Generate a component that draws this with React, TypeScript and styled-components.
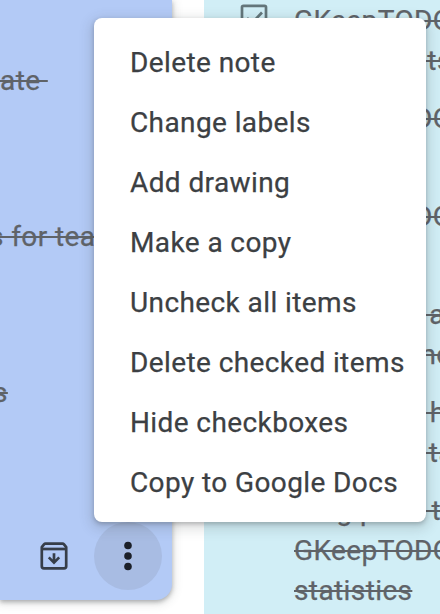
import React from "react";
import styled, { createGlobalStyle } from "styled-components";

const Global = createGlobalStyle`
  *{box-sizing:border-box}
  html,body,#root{margin:0;height:100%}
  body{background:#fff;overflow:hidden;font-family:Roboto,sans-serif;font-size:28px;-webkit-text-stroke:.25px currentColor}
`;
const Board = styled.main`
  position:relative;width:440px;height:614px;overflow:hidden;
  display:flex;gap:32px;background:#fff;
`;
const BlueNote = styled.section`
  width:172px;height:600px;flex:none;display:flex;flex-direction:column;
  background:#b3caf6;border-radius:0 0 16px 0;
  box-shadow:0 2px 4px rgba(60,64,67,.35),0 2px 10px 2px rgba(60,64,67,.15);
`;
const BlueItems = styled.div`
  flex:1;padding-top:61px;display:flex;flex-direction:column;gap:116px;
`;
const Line = styled.div<{ $x?: number }>`
  height:40px;line-height:40px;flex:none;white-space:pre;
  margin-left:${p => p.$x ?? 0}px;
  color:#5f6368;letter-spacing:.4px;
  text-decoration:line-through;text-decoration-thickness:2px;
`;
const Tail = styled.span`margin-left:48px;`;
const Toolbar = styled.div`
  height:88px;flex:none;display:flex;align-items:center;padding:0 10px 0 40px;
  justify-content:space-between;
`;
const MoreButton = styled.div`
  width:68px;height:68px;border-radius:50%;background:#a8bce3;
  display:flex;align-items:center;justify-content:center;
`;
const CyanNote = styled.section`
  width:236px;height:614px;flex:none;background:#d1eef6;overflow:hidden;
  display:flex;flex-direction:column;gap:18px;padding-top:1px;
`;
const Item = styled.div`
  display:grid;grid-template-columns:90px 1fr;flex:none;
`;
const Box = styled.div`padding:3px 0 0 36px;height:40px;`;
const Menu = styled.ul`
  position:absolute;left:94px;top:18px;width:332px;height:504px;margin:0;
  padding:15px 0 0;list-style:none;background:#fff;border-radius:8px;
  box-shadow:0 2px 4px rgba(60,64,67,.3),0 4px 12px 4px rgba(60,64,67,.15);
`;
const MenuItem = styled.li`
  height:60px;line-height:60px;padding-left:36px;color:#3c4043;letter-spacing:.4px;white-space:nowrap;
`;

const actions = ["Delete note","Change labels","Add drawing","Make a copy","Uncheck all items","Delete checked items","Hide checkboxes","Copy to Google Docs"];
const items: { text: string; x?: number; tail?: string }[][] = [
  [{ text: "GKeepTODO" }, { text: " ts", x: 126 }],
  [{ text: "GKeepTODO" }, { text: "" }],
  [{ text: "GKeepTODO" }, { text: "" }],
  [{ text: " a", x: 128 }, { text: "no", x: 126.5 }],
  [{ text: " h", x: 128.5 }, { text: " ta", x: 127.5 }],
  [{ text: "ing p", x: 19.5, tail: " t" }, { text: "GKeepTODO" }, { text: "statistics" }],
];

export default function App() {
  return (
    <Board>
      <Global />
      <BlueNote>
        <BlueItems>
          <Line>ate </Line>
          <Line $x={-11}>s for tea</Line>
          <Line $x={-7}>s</Line>
        </BlueItems>
        <Toolbar>
          <svg width="28" height="28" viewBox="0 0 28 28" fill="none" stroke="#373e49" strokeWidth="2.7" strokeLinejoin="round">
            <path d="M1.8 5.2V24.2Q1.8 26.3 3.9 26.3H24.1Q26.2 26.3 26.2 24.2V5.2L24 2.4Q23.4 1.7 22.5 1.7H5.5Q4.6 1.7 4 2.4Z" />
            <path d="M2 7H26" />
            <path d="M14 11.2v9.5M8.8 15.4l5.2 5.2 5.2-5.2" strokeLinejoin="miter" />
          </svg>
          <MoreButton>
            <svg width="8" height="30" viewBox="0 0 8 30" fill="#1c2029">
              <circle cx="4" cy="4.5" r="3.8" /><circle cx="4" cy="15" r="3.8" /><circle cx="4" cy="25.5" r="3.8" />
            </svg>
          </MoreButton>
        </Toolbar>
      </BlueNote>
      <CyanNote>
        {items.map((lines, i) => (
          <Item key={i}>
            <Box>
              {i === 0 && (
                <svg width="28" height="28" viewBox="0 0 28 28" fill="none" stroke="#63757a" strokeWidth="2.7">
                  <rect x="2" y="1.8" width="24" height="24" rx="1.5" /><path d="M7 14l5 5L22 8.5" />
                </svg>
              )}
            </Box>
            <div>
              {lines.map((l, j) => (
                <Line key={j} $x={l.x}>{l.text}{l.tail && <Tail>{l.tail}</Tail>}</Line>
              ))}
            </div>
          </Item>
        ))}
      </CyanNote>
      <Menu>{actions.map(a => <MenuItem key={a}>{a}</MenuItem>)}</Menu>
    </Board>
  );
}
